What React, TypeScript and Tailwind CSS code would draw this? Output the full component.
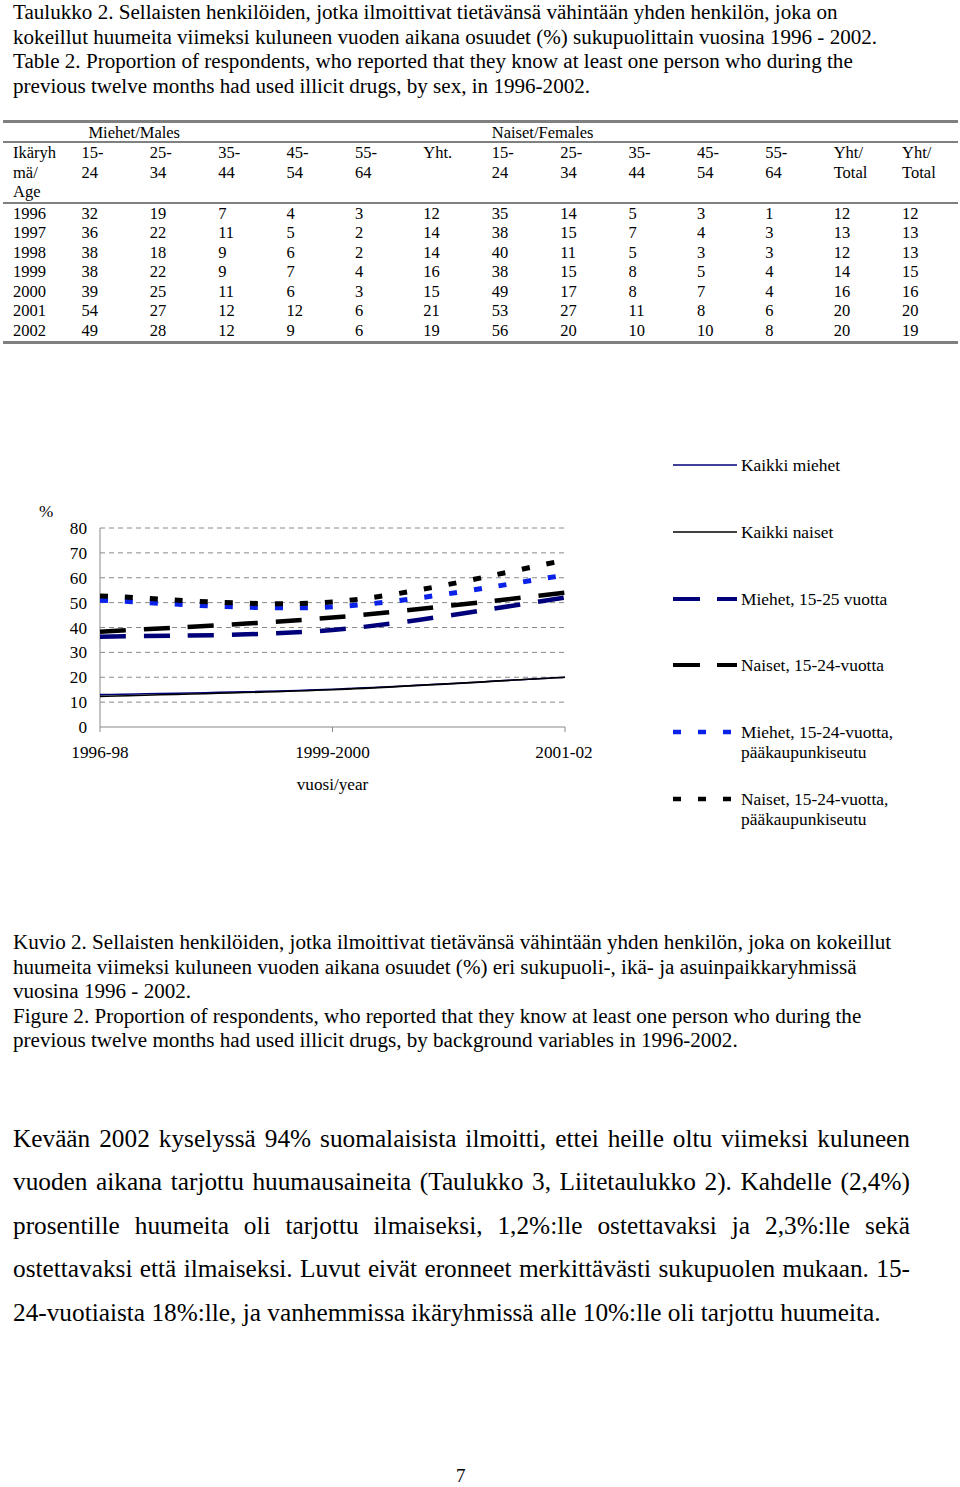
import React from 'react';

const headRows = [
  ['Ikäryh', '15-', '25-', '35-', '45-', '55-', 'Yht.', '15-', '25-', '35-', '45-', '55-', 'Yht/', 'Yht/'],
  ['mä/', '24', '34', '44', '54', '64', '', '24', '34', '44', '54', '64', 'Total', 'Total'],
  ['Age', '', '', '', '', '', '', '', '', '', '', '', '', ''],
];

const dataRows = [
  ['1996', '32', '19', '7', '4', '3', '12', '35', '14', '5', '3', '1', '12', '12'],
  ['1997', '36', '22', '11', '5', '2', '14', '38', '15', '7', '4', '3', '13', '13'],
  ['1998', '38', '18', '9', '6', '2', '14', '40', '11', '5', '3', '3', '12', '13'],
  ['1999', '38', '22', '9', '7', '4', '16', '38', '15', '8', '5', '4', '14', '15'],
  ['2000', '39', '25', '11', '6', '3', '15', '49', '17', '8', '7', '4', '16', '16'],
  ['2001', '54', '27', '12', '12', '6', '21', '53', '27', '11', '8', '6', '20', '20'],
  ['2002', '49', '28', '12', '9', '6', '19', '56', '20', '10', '10', '8', '20', '19'],
];

// chart geometry (page coordinates)
const X = [100, 332.5, 565];
const Y0 = 728;
const PER = 2.4875;
const yOf = (v: number) => Y0 - v * PER;

interface Series {
  values: number[];
  color: string;
  width: number;
  dash?: string;
}

const series: Series[] = [
  { values: [13, 15.2, 20], color: '#00007a', width: 1.6 },
  { values: [12.3, 15, 20], color: '#000000', width: 1.6 },
  { values: [36.3, 39, 52], color: '#00007a', width: 4.5, dash: '26 18' },
  { values: [38.3, 44, 54], color: '#000000', width: 4.5, dash: '26 18' },
  { values: [51, 48.3, 61], color: '#0a22e8', width: 5, dash: '8 17' },
  { values: [52.7, 50.3, 67], color: '#000000', width: 5, dash: '8 17' },
];

function smoothPath(values: number[]) {
  const pts = values.map((v, i) => [X[i], yOf(v)]);
  let d = `M${pts[0][0]},${pts[0][1]}`;
  for (let i = 0; i < pts.length - 1; i++) {
    const p0 = pts[i - 1] || pts[i];
    const p1 = pts[i];
    const p2 = pts[i + 1];
    const p3 = pts[i + 2] || p2;
    const c1x = p1[0] + (p2[0] - p0[0]) / 6;
    const c1y = p1[1] + (p2[1] - p0[1]) / 6;
    const c2x = p2[0] - (p3[0] - p1[0]) / 6;
    const c2y = p2[1] - (p3[1] - p1[1]) / 6;
    d += ` C${c1x},${c1y} ${c2x},${c2y} ${p2[0]},${p2[1]}`;
  }
  return d;
}

const legend = [
  { label: ['Kaikki miehet'], color: '#00007a', width: 1.6 },
  { label: ['Kaikki naiset'], color: '#000000', width: 1.6 },
  { label: ['Miehet, 15-25 vuotta'], color: '#00007a', width: 4, dash: '27 17' },
  { label: ['Naiset, 15-24-vuotta'], color: '#000000', width: 4, dash: '27 17' },
  { label: ['Miehet, 15-24-vuotta,', 'pääkaupunkiseutu'], color: '#0a22e8', width: 4.5, dash: '8 17' },
  { label: ['Naiset, 15-24-vuotta,', 'pääkaupunkiseutu'], color: '#000000', width: 4.5, dash: '8 17' },
];

function Row({ cells }: { cells: string[] }) {
  return (
    <div className="grid grid-cols-[repeat(13,68.4px)_1fr] h-[19.5px] leading-[19.5px]">
      {cells.map((c, i) => (
        <div key={i} className="whitespace-nowrap">{c}</div>
      ))}
    </div>
  );
}

function Chart() {
  return (
    <svg width={640} height={390} viewBox="0 450 640 390" className="shrink-0">
      {[10, 20, 30, 40, 50, 60, 70, 80].map((v) => (
        <line key={v} x1={100} x2={565} y1={yOf(v)} y2={yOf(v)} stroke="#8a8a8a" strokeWidth={1} strokeDasharray="5 4" />
      ))}
      <line x1={100} x2={100} y1={yOf(80)} y2={Y0} stroke="#8a8a8a" strokeWidth={1} />
      <line x1={100} x2={565} y1={Y0} y2={Y0} stroke="#8a8a8a" strokeWidth={1} />
      {X.map((x) => (
        <line key={x} x1={x} x2={x} y1={Y0} y2={Y0 + 5} stroke="#8a8a8a" strokeWidth={1} />
      ))}
      {series.map((s, i) => (
        <path key={i} d={smoothPath(s.values)} fill="none" stroke={s.color} strokeWidth={s.width} strokeDasharray={s.dash} />
      ))}
      <g fontSize={17.2} fill="#000">
        <text x={39} y={518}>%</text>
        {[0, 10, 20, 30, 40, 50, 60, 70, 80].map((v) => (
          <text key={v} x={87} y={yOf(v) + 6} textAnchor="end">{v}</text>
        ))}
        <text x={100} y={759} textAnchor="middle">1996-98</text>
        <text x={332.5} y={759} textAnchor="middle">1999-2000</text>
        <text x={564} y={759} textAnchor="middle">2001-02</text>
        <text x={332.5} y={791} textAnchor="middle">vuosi/year</text>
      </g>
    </svg>
  );
}

export default function App() {
  return (
    <div className="w-[960px] h-[1487px] bg-white text-black font-['Liberation_Serif',serif] overflow-hidden">
      {/* Table caption */}
      <div className="pl-[13px] text-[21.1px] leading-[24.5px] whitespace-nowrap">
        <div>Taulukko 2. Sellaisten henkilöiden, jotka ilmoittivat tietävänsä vähintään yhden henkilön, joka on</div>
        <div>kokeillut huumeita viimeksi kuluneen vuoden aikana osuudet (%) sukupuolittain vuosina 1996 - 2002.</div>
        <div>Table 2. Proportion of respondents, who reported that they know at least one person who during the</div>
        <div>previous twelve months had used illicit drugs, by sex, in 1996-2002.</div>
      </div>

      {/* Table */}
      <div className="mt-[22px] ml-[3px] w-[955px] text-[16.5px] border-t-[3px] border-b-[3px] border-[#808080]">
        <div className="grid grid-cols-[repeat(13,68.4px)_1fr] pl-[10px] h-[20px] leading-[20px] border-b-2 border-[#808080]">
          <div className="col-start-2 col-span-5 pl-[7px] whitespace-nowrap">Miehet/Males</div>
          <div className="col-start-8 col-span-6 whitespace-nowrap">Naiset/Females</div>
        </div>
        <div className="pl-[10px] border-b-2 border-[#808080]">
          {headRows.map((r, i) => (
            <Row key={i} cells={r} />
          ))}
        </div>
        <div className="pl-[10px] pb-[1px]">
          {dataRows.map((r, i) => (
            <Row key={i} cells={r} />
          ))}
        </div>
      </div>

      {/* Figure */}
      <div className="mt-[105px] flex h-[390px]">
        <Chart />
        <div className="flex flex-col pt-[6px] text-[17.4px] leading-[20px]">
          {legend.map((l, i) => (
            <div key={i} className="flex items-start h-[66.8px] shrink-0">
              <svg width={64} height={20} className="ml-[33px] shrink-0">
                <line x1={0} x2={64} y1={10} y2={10} stroke={l.color} strokeWidth={l.width} strokeDasharray={l.dash} />
              </svg>
              <div className="ml-[4px] whitespace-nowrap">
                {l.label.map((t) => (
                  <div key={t}>{t}</div>
                ))}
              </div>
            </div>
          ))}
        </div>
      </div>

      {/* Figure caption */}
      <div className="mt-[91px] pl-[13px] text-[21.1px] leading-[24.5px] whitespace-nowrap">
        <div>Kuvio 2. Sellaisten henkilöiden, jotka ilmoittivat tietävänsä vähintään yhden henkilön, joka on kokeillut</div>
        <div>huumeita viimeksi kuluneen vuoden aikana osuudet (%) eri sukupuoli-, ikä- ja asuinpaikkaryhmissä</div>
        <div>vuosina 1996 - 2002.</div>
        <div>Figure 2. Proportion of respondents, who reported that they know at least one person who during the</div>
        <div>previous twelve months had used illicit drugs, by background variables in 1996-2002.</div>
      </div>

      {/* Body text */}
      <div className="mt-[64px] ml-[13px] w-[897px] text-[25.3px] leading-[43.5px]">
        <div className="text-justify [text-align-last:justify] whitespace-nowrap">Kevään 2002 kyselyssä 94% suomalaisista ilmoitti, ettei heille oltu viimeksi kuluneen</div>
        <div className="text-justify [text-align-last:justify] whitespace-nowrap">vuoden aikana tarjottu huumausaineita (Taulukko 3, Liitetaulukko 2). Kahdelle (2,4%)</div>
        <div className="text-justify [text-align-last:justify] whitespace-nowrap">prosentille huumeita oli tarjottu ilmaiseksi, 1,2%:lle ostettavaksi ja 2,3%:lle sekä</div>
        <div className="text-justify [text-align-last:justify] whitespace-nowrap">ostettavaksi että ilmaiseksi. Luvut eivät eronneet merkittävästi sukupuolen mukaan. 15-</div>
        <div className="whitespace-nowrap">24-vuotiaista 18%:lle, ja vanhemmissa ikäryhmissä alle 10%:lle oli tarjottu huumeita.</div>
      </div>

      <div className="mt-[130px] pl-[456px] text-[19px] leading-[24px]">7</div>
    </div>
  );
}
